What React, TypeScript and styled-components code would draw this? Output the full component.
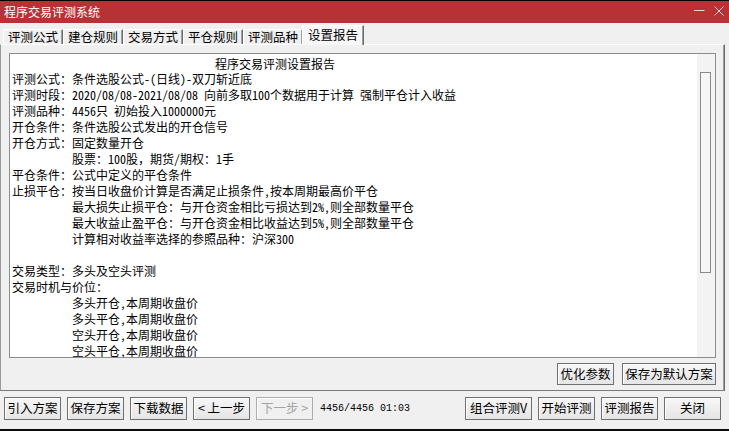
import React from "react";
import styled, { createGlobalStyle } from "styled-components";

const UI = `"Noto Sans CJK SC", sans-serif`;
const MONO_CJK = `"Noto Sans Mono CJK SC", "Noto Sans CJK SC", sans-serif`;

const GlobalStyle = createGlobalStyle`
  html, body { margin: 0; padding: 0; background: #f0f0f0; }
  body { font-family: ${UI}; }
`;

const Window = styled.div`
  width: 729px;
  height: 431px;
  box-sizing: border-box;
  border-top: 1px solid #000;
  border-bottom: 2px solid #0b0b0b;
  background: #f0f0f0;
  display: flex;
  flex-direction: column;
  overflow: hidden;
`;

const TitleBar = styled.div`
  flex: none;
  height: 22px;
  background: #b73135;
  display: flex;
  align-items: center;
  padding: 0 5px 0 4px;
  color: #fff;
  font: 12px/1 ${UI};
`;

const TitleText = styled.span`
  flex: 1;
`;

const WinControls = styled.div`
  display: flex;
  align-items: center;
  gap: 9px;
  margin-bottom: 3px;
  svg { display: block; }
`;

const TabStrip = styled.div`
  flex: none;
  height: 21px;
  display: flex;
  align-items: flex-end;
  padding-left: 3px;
`;

const Tab = styled.div<{ $active?: boolean }>`
  position: relative;
  z-index: ${(p) => (p.$active ? 1 : 0)};
  box-sizing: border-box;
  width: ${(p) => (p.$active ? 62 : 60)}px;
  height: ${(p) => (p.$active ? 20 : 15)}px;
  margin-left: ${(p) => (p.$active ? -1 : 0)}px;
  margin-bottom: ${(p) => (p.$active ? -1 : 0)}px;
  background: ${(p) => (p.$active ? "#f7f7f7" : "#f0f0f0")};
  border-top: 1px solid #fff;
  border-left: 1px solid #fff;
  border-right: 1px solid #6b6b6b;
  box-shadow: inset -1px 0 0 #a0a0a0;
  display: flex;
  align-items: center;
  justify-content: center;
  padding-bottom: ${(p) => (p.$active ? 1 : 0)}px;
  font: 12.5px/1 ${UI};
  color: #000;
  white-space: nowrap;
`;

const Panel = styled.div`
  flex: none;
  box-sizing: border-box;
  width: 725px;
  height: 347px;
  border-top: 1px solid #fff;
  border-left: 1px solid #9a9a9a;
  border-right: 1px solid #6b6b6b;
  border-bottom: 1px solid #7a7a7a;
  box-shadow: inset -1px 0 0 #a0a0a0;
  padding: 8px 8px 5px 8px;
  display: flex;
  flex-direction: column;
  gap: 5px;
`;

const TextBox = styled.div`
  flex: none;
  box-sizing: border-box;
  height: 305px;
  border: 1px solid #8c8c8c;
  background: #fff;
  display: flex;
`;

const TextContent = styled.div`
  flex: 1;
  overflow: hidden;
  padding: 3px 0 0 2px;
  font: 12px/16px ${MONO_CJK};
  color: #000;
  white-space: pre;
`;

const ReportTitle = styled.div`
  line-height: 14px;
  text-indent: 203px;
`;

const Line = styled.div<{ $indent?: boolean }>`
  height: 16px;
  padding-left: ${(p) => (p.$indent ? 60 : 0)}px;
`;

const ScrollTrack = styled.div`
  flex: none;
  width: 18px;
  box-sizing: border-box;
  background: #f3f3f3;
  padding-top: 18px;
`;

const ScrollThumb = styled.div`
  margin-left: 3px;
  width: 11px;
  height: 201px;
  box-sizing: border-box;
  border: 1px solid #8a8a8a;
  background: #f6f6f6;
`;

const ActionRow = styled.div`
  display: flex;
  justify-content: flex-end;
  gap: 8px;
`;

const Button = styled.div<{ $w: number; $h?: number; $disabled?: boolean }>`
  flex: none;
  box-sizing: border-box;
  width: ${(p) => p.$w}px;
  height: ${(p) => p.$h ?? 23}px;
  border: 1px solid ${(p) => (p.$disabled ? "#adadad" : "#6f6f6f")};
  background: ${(p) =>
    p.$disabled ? "#f0f0f0" : "linear-gradient(#f7f7f7, #e5e5e5)"};
  box-shadow: inset 1px 1px 0 #fff;
  color: ${(p) => (p.$disabled ? "#a3a3a3" : "#000")};
  font: 12.5px/1 ${UI};
  display: flex;
  align-items: center;
  justify-content: center;
  white-space: pre;
`;

const BottomBar = styled.div`
  flex: 1;
  display: flex;
  align-items: flex-start;
  padding: 6px 8px 0 4px;
`;

const ButtonGroup = styled.div<{ $push?: boolean }>`
  display: flex;
  gap: 6px;
  margin-left: ${(p) => (p.$push ? "auto" : "0")};
`;

const Status = styled.div`
  margin-left: 7px;
  height: 23px;
  display: flex;
  align-items: center;
  font: 10px/1 "Liberation Mono", monospace;
  color: #000;
  white-space: pre;
`;

const MinIcon = () => (
  <svg width="11" height="11" viewBox="0 0 11 11">
    <path d="M0 5.5H10.5" stroke="#efd6d6" strokeWidth="1" />
  </svg>
);

const CloseIcon = () => (
  <svg width="10" height="10" viewBox="0 0 10 10">
    <path d="M0.5 0.5L9.5 9.5M9.5 0.5L0.5 9.5" stroke="#efd6d6" strokeWidth="1" />
  </svg>
);

const tabs = ["评测公式", "建仓规则", "交易方式", "平仓规则", "评测品种", "设置报告"];

type ReportLine = { text: string; indent?: boolean };

const reportLines: ReportLine[] = [
  { text: "评测公式：条件选股公式-(日线)-双刀斩近底" },
  { text: "评测时段：2020/08/08-2021/08/08 向前多取100个数据用于计算 强制平仓计入收益" },
  { text: "评测品种：4456只 初始投入1000000元" },
  { text: "开仓条件：条件选股公式发出的开仓信号" },
  { text: "开仓方式：固定数量开仓" },
  { text: "股票：100股，期货/期权：1手", indent: true },
  { text: "平仓条件：公式中定义的平仓条件" },
  { text: "止损平仓：按当日收盘价计算是否满足止损条件,按本周期最高价平仓" },
  { text: "最大损失止损平仓：与开仓资金相比亏损达到2%,则全部数量平仓", indent: true },
  { text: "最大收益止盈平仓：与开仓资金相比收益达到5%,则全部数量平仓", indent: true },
  { text: "计算相对收益率选择的参照品种：沪深300", indent: true },
  { text: "" },
  { text: "交易类型：多头及空头评测" },
  { text: "交易时机与价位：" },
  { text: "多头开仓,本周期收盘价", indent: true },
  { text: "多头平仓,本周期收盘价", indent: true },
  { text: "空头开仓,本周期收盘价", indent: true },
  { text: "空头平仓,本周期收盘价", indent: true },
];

export default function App() {
  return (
    <>
      <GlobalStyle />
      <Window>
        <TitleBar>
          <TitleText>程序交易评测系统</TitleText>
          <WinControls>
            <MinIcon />
            <CloseIcon />
          </WinControls>
        </TitleBar>
        <TabStrip>
          {tabs.map((t, i) => (
            <Tab key={t} $active={i === tabs.length - 1}>
              {t}
            </Tab>
          ))}
        </TabStrip>
        <Panel>
          <TextBox>
            <TextContent>
              <ReportTitle>程序交易评测设置报告</ReportTitle>
              {reportLines.map((l, i) => (
                <Line key={i} $indent={l.indent}>
                  {l.text}
                </Line>
              ))}
            </TextContent>
            <ScrollTrack>
              <ScrollThumb />
            </ScrollTrack>
          </TextBox>
          <ActionRow>
            <Button $w={57} $h={22}>优化参数</Button>
            <Button $w={94} $h={22}>保存为默认方案</Button>
          </ActionRow>
        </Panel>
        <BottomBar>
          <ButtonGroup>
            <Button $w={57}>引入方案</Button>
            <Button $w={57}>保存方案</Button>
            <Button $w={57}>下载数据</Button>
            <Button $w={57}>{"< 上一步"}</Button>
            <Button $w={57} $disabled>{"下一步 >"}</Button>
          </ButtonGroup>
          <Status>4456/4456 01:03</Status>
          <ButtonGroup $push>
            <Button $w={67}>组合评测V</Button>
            <Button $w={57}>开始评测</Button>
            <Button $w={57}>评测报告</Button>
            <Button $w={57}>关闭</Button>
          </ButtonGroup>
        </BottomBar>
      </Window>
    </>
  );
}
